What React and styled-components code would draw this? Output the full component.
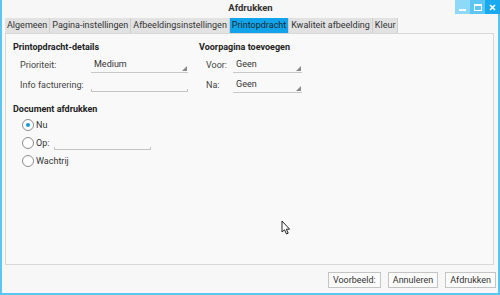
import React from 'react'
import styled, {createGlobalStyle} from 'styled-components'

const Global = createGlobalStyle`
  html, body { margin: 0; padding: 0; background: #f7f7f7; }
  body { font-family: Roboto, "Liberation Sans", sans-serif; font-size: 9px; color: #3a3a3a; }
`

const Window = styled.div`
  position: relative;
  width: 500px;
  height: 295px;
  box-sizing: border-box;
  border: 2px solid #5bc5f3;
  border-top: none;
  background: #f7f7f7;
  display: flex;
  flex-direction: column;
`

const TitleBar = styled.div`
  height: 16px;
  display: flex;
  align-items: flex-start;
`

const Title = styled.div`
  flex: 1;
  text-align: center;
  font-weight: bold;
  font-size: 9.5px;
  color: #333;
  line-height: 16px;
  padding-left: 44px;
`

const WinButtons = styled.div`
  display: flex;
  margin-right: -2px;
`

const WinButton = styled.div`
  width: 15px;
  height: 14px;
  background: ${p => p.bg};
  display: flex;
  align-items: center;
  justify-content: center;
`

const Tabs = styled.div`
  display: flex;
  margin: 2px 0 0 3px;
  height: 15px;
`

const Tab = styled.div`
  padding: 0 2px;
  line-height: 15px;
  background: ${p => (p.active ? '#12a4ea' : '#e2e2e2')};
  color: ${p => (p.active ? '#1a2a33' : '#333')};
  border-right: 1px solid #cfcfcf;
  white-space: nowrap;
`

const Panel = styled.div`
  flex: 1;
  margin: 0 4px 0 3px;
  border: 1px solid #d8d8d8;
  background: #f9f9f9;
  padding: 7px 7px 0 7px;
`

const TopGrid = styled.div`
  display: grid;
  grid-template-columns: 186px 1fr;
`

const Section = styled.div`
  display: flex;
  flex-direction: column;
`

const Heading = styled.div`
  font-weight: bold;
  color: #222;
  line-height: 12px;
  margin-bottom: ${p => p.gap}px;
`

const FieldRow = styled.div`
  display: grid;
  grid-template-columns: ${p => p.labelWidth}px ${p => p.fieldWidth}px;
  align-items: center;
  height: 20px;
  padding-left: 7px;
`

const Label = styled.span`
  color: #444;
`

const Select = styled.div`
  position: relative;
  height: 14px;
  line-height: 13px;
  padding-left: 3px;
  border-bottom: 1px solid #c8c8c8;
  color: #333;
  &::after {
    content: '';
    position: absolute;
    right: 1px;
    bottom: 1px;
    border-style: solid;
    border-width: 0 0 5px 5px;
    border-color: transparent transparent #8a8a8a transparent;
  }
`

const Input = styled.div`
  height: 14px;
  width: ${p => p.width}px;
  margin-left: ${p => p.offset || 0}px;
  display: flex;
  align-items: flex-end;
  &::after {
    content: '';
    flex: 1;
    height: 2px;
    border: 1px solid #c4c4c4;
    border-top: none;
  }
`

const DocSection = styled(Section)`
  margin-top: 8px;
`

const RadioRow = styled.div`
  display: flex;
  align-items: center;
  height: 18px;
  padding-left: 9px;
  gap: 2px;
`

const RadioCircle = styled.span`
  width: 10px;
  height: 10px;
  border-radius: 50%;
  border: 1px solid #8d8d8d;
  background: #fff;
  display: flex;
  align-items: center;
  justify-content: center;
  &::after {
    content: '';
    width: 4px;
    height: 4px;
    border-radius: 50%;
    background: ${p => (p.checked ? '#1a98e0' : 'transparent')};
  }
`

const RadioText = styled.span`
  color: #333;
`

const Footer = styled.div`
  height: 27px;
  display: flex;
  justify-content: flex-end;
  align-items: center;
  gap: 7px;
  padding-right: 2px;
  padding-top: 1px;
`

const Button = styled.div`
  height: 14px;
  line-height: 14px;
  padding: 0 4px;
  border: 1px solid #c4c4c4;
  background: #fbfbfb;
  color: #333;
`

const Cursor = styled.svg`
  position: absolute;
  left: 279px;
  top: 220px;
`

export default function App() {
  const tabs = ['Algemeen', 'Pagina-instellingen', 'Afbeeldingsinstellingen', 'Printopdracht', 'Kwaliteit afbeelding', 'Kleur']
  return (
    <>
      <Global />
      <Window>
        <TitleBar>
          <Title>Afdrukken</Title>
          <WinButtons>
            <WinButton bg="#8ed8f8">
              <svg width="7" height="7"><rect x="0" y="5" width="7" height="2" fill="#fff" /></svg>
            </WinButton>
            <WinButton bg="#5cc6f5">
              <svg width="8" height="7"><rect x="0.5" y="0.5" width="7" height="6" fill="none" stroke="#fff" /><rect x="0" y="0" width="8" height="2" fill="#fff" /></svg>
            </WinButton>
            <WinButton bg="#18a9ef">
              <svg width="7" height="7"><path d="M1 1 L6 6 M6 1 L1 6" stroke="#fff" strokeWidth="1.6" /></svg>
            </WinButton>
          </WinButtons>
        </TitleBar>
        <Tabs>
          {tabs.map(t => (
            <Tab key={t} active={t === 'Printopdracht'}>{t}</Tab>
          ))}
        </Tabs>
        <Panel>
          <TopGrid>
            <Section>
              <Heading gap={2}>Printopdracht-details</Heading>
              <FieldRow labelWidth={71} fieldWidth={97}>
                <Label>Prioriteit:</Label>
                <Select>Medium</Select>
              </FieldRow>
              <FieldRow labelWidth={71} fieldWidth={97}>
                <Label>Info facturering:</Label>
                <Input width={97} />
              </FieldRow>
            </Section>
            <Section>
              <Heading gap={2}>Voorpagina toevoegen</Heading>
              <FieldRow labelWidth={27} fieldWidth={69}>
                <Label>Voor:</Label>
                <Select>Geen</Select>
              </FieldRow>
              <FieldRow labelWidth={27} fieldWidth={69}>
                <Label>Na:</Label>
                <Select>Geen</Select>
              </FieldRow>
            </Section>
          </TopGrid>
          <DocSection>
            <Heading gap={1}>Document afdrukken</Heading>
            <RadioRow>
              <RadioCircle checked />
              <RadioText>Nu</RadioText>
            </RadioRow>
            <RadioRow>
              <RadioCircle />
              <RadioText>Op:</RadioText>
              <Input width={97} offset={3} />
            </RadioRow>
            <RadioRow>
              <RadioCircle />
              <RadioText>Wachtrij</RadioText>
            </RadioRow>
          </DocSection>
        </Panel>
        <Footer>
          <Button>Voorbeeld:</Button>
          <Button>Annuleren</Button>
          <Button>Afdrukken</Button>
        </Footer>
        <Cursor width="12" height="16" viewBox="0 0 12 16">
          <path d="M1 1 L1 12 L3.5 9.8 L5.5 14 L7.2 13.2 L5.3 9.2 L8.6 9.2 Z" fill="#fff" stroke="#222" strokeWidth="1" strokeLinejoin="round" />
        </Cursor>
      </Window>
    </>
  )
}
